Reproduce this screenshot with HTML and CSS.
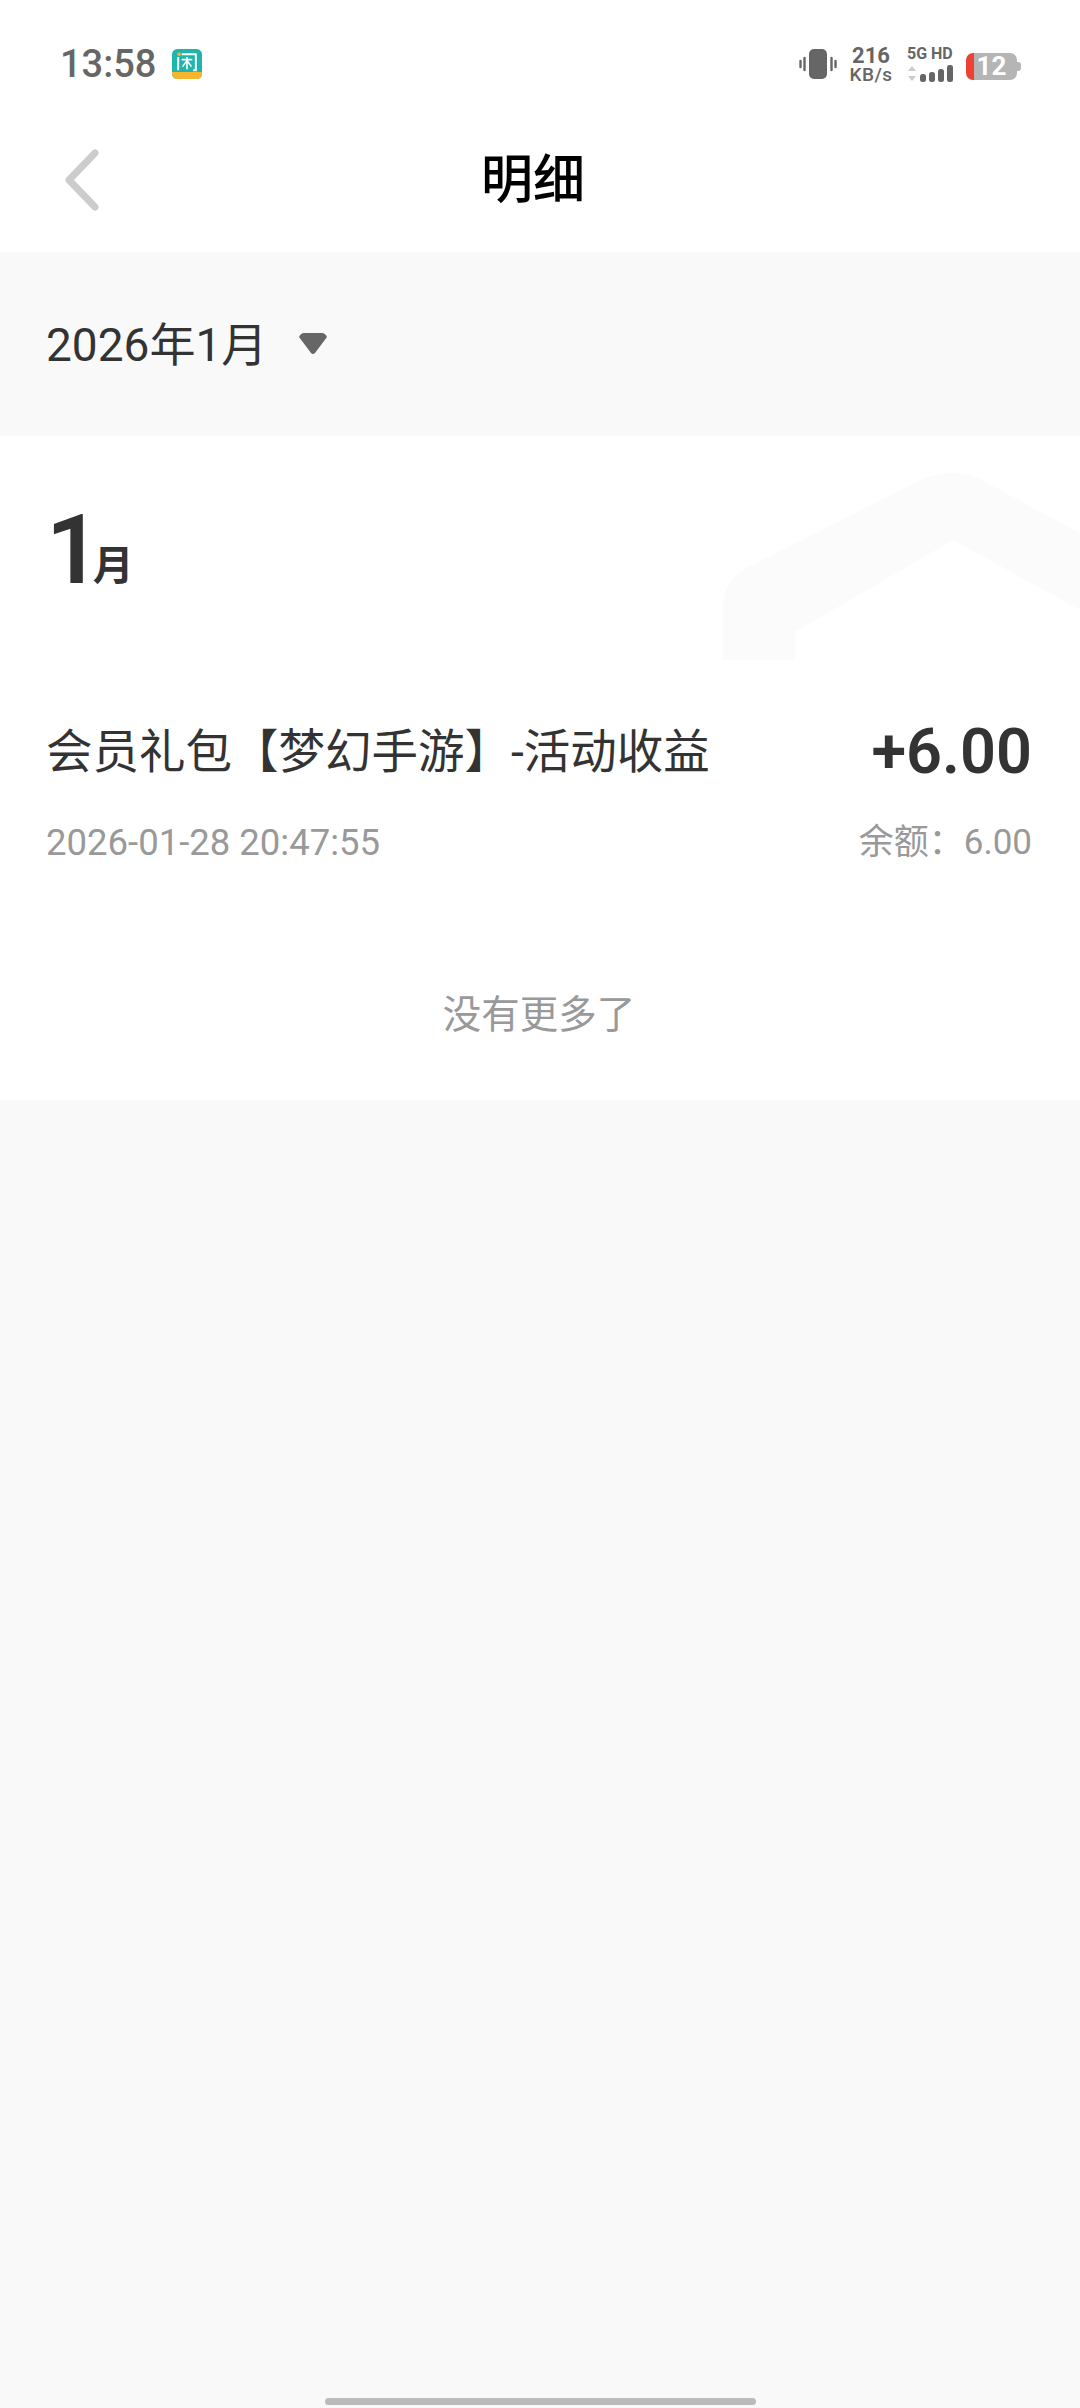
FILE: index.html
```html
<!DOCTYPE html>
<html lang="zh-CN">
<head>
    <meta charset="UTF-8">
    <meta name="viewport" content="width=device-width, initial-scale=1.0">
    <title>明细</title>
    <link rel="stylesheet" href="styles.css">
</head>
<body>
    <div class="status-bar">
        <div class="status-left">
            <span class="clock">13:58</span>
            <svg class="app-icon" width="30" height="30" viewBox="0 0 34 34">
                <rect width="34" height="34" rx="6" fill="#1fb5ac"/>
                <path d="M0 26h34v2a6 6 0 0 1-6 6H6a6 6 0 0 1-6-6z" fill="#f5b52e"/>
                <path d="M7 24V9M11 6h16v18h-3" fill="none" stroke="#fff" stroke-width="2.2"/>
                <path d="M11 12h12M17 9v14M17 13l-5 7M17 13l5 7" fill="none" stroke="#fff" stroke-width="1.8"/>
                <circle cx="8" cy="6" r="2" fill="#f5b52e"/>
            </svg>
        </div>
        <div class="status-right">
            <svg width="38" height="32" viewBox="0 0 38 32">
                <rect x="10" y="1" width="18" height="30" rx="5" fill="#666"/>
                <path d="M5.500 10v12M1.500 13v6M32.500 10v12M36.500 13v6" stroke="#666" stroke-width="2.400" stroke-linecap="round"/>
            </svg>
            <div class="speed">
                <span class="speed-num">216</span>
                <span class="speed-unit">KB/s</span>
            </div>
            <div class="network">
                <span class="network-label">5G HD</span>
                <svg width="47" height="17" viewBox="0 0 47 17">
                    <path d="M1 6l4-5 4 5zM1 11h8l-4 5z" fill="#ccc"/>
                    <rect x="13" y="9" width="6" height="8" rx="2.500" fill="#666"/>
                    <rect x="22" y="7" width="6" height="10" rx="2.500" fill="#666"/>
                    <rect x="31" y="4" width="6" height="13" rx="2.500" fill="#666"/>
                    <rect x="40" y="0" width="6" height="17" rx="2.500" fill="#666"/>
                </svg>
            </div>
            <div class="battery">
                <span class="battery-num">12</span>
            </div>
        </div>
    </div>

    <div class="top-bar">
        <svg class="back" width="36" height="62" viewBox="0 0 36 62">
            <path d="M31 4L5 31l26 27" fill="none" stroke="#ccc" stroke-width="7" stroke-linecap="round" stroke-linejoin="round"/>
        </svg>
        <h1 class="title">明细</h1>
    </div>

    <div class="filter">
        <span class="filter-date">2026年1月</span>
        <svg class="filter-arrow" width="32" height="23" viewBox="0 0 32 23">
            <path d="M7 1h18q3 0 5 4L18 21q-2 2-4 0L2 5q2-4 5-4z" fill="#666"/>
        </svg>
    </div>

    <div class="list">
        <svg class="watermark" width="357" height="190" viewBox="0 0 357 190">
            <path d="M0 188v-52q0-26 24-40L190 12q38-22 76 0l91 49v77L230 68 72 160v28z" fill="#fbfbfb"/>
        </svg>
        <div class="month"><span class="month-num">1</span><span class="month-unit">月</span></div>
        <div class="record">
            <div class="record-row">
                <span class="record-name">会员礼包【梦幻手游】-活动收益</span>
                <span class="record-amount">+6.00</span>
            </div>
            <div class="record-row record-sub">
                <span>2026-01-28 20:47:55</span>
                <span class="record-balance">余额：6.00</span>
            </div>
        </div>
        <div class="no-more">没有更多了</div>
    </div>

    <div class="home-bar"></div>
</body>
</html>
```

FILE: styles.css
```css
* {
    box-sizing: border-box;
}

html, body {
    height: 100%;
}

body {
    margin: 0;
    display: flex;
    flex-direction: column;
    background-color: #f9f9f9;
    font-family: Roboto, "Noto Sans CJK SC", sans-serif;
    color: #333;
    overflow: hidden;
}

.status-bar {
    height: 84px;
    padding: 47px 63px 0 60px;
    display: flex;
    justify-content: space-between;
    align-items: flex-start;
    background-color: #fff;
}

.status-left {
    display: flex;
    align-items: center;
    gap: 16px;
    height: 34px;
}

.clock {
    font-size: 38px;
    font-weight: 500;
    color: #666;
}

.status-right {
    display: flex;
    align-items: center;
    height: 34px;
}

.speed {
    margin-left: 11px;
    width: 46px;
    display: flex;
    flex-direction: column;
    align-items: center;
    color: #666;
}

.speed-num {
    font-size: 22px;
    font-weight: 700;
    line-height: 20px;
}

.speed-unit {
    font-size: 19px;
    font-weight: 500;
    letter-spacing: 0.5px;
    line-height: 17px;
}

.network {
    margin-left: 13px;
    width: 48px;
    display: flex;
    flex-direction: column;
    gap: 4px;
    color: #666;
}

.network-label {
    font-size: 16px;
    font-weight: 700;
    line-height: 14px;
    white-space: nowrap;
}

.battery {
    margin-left: 11px;
    width: 51px;
    height: 27px;
    margin-top: 5px;
    border-radius: 7px;
    background: linear-gradient(to right, #ee4136 8px, #b5b5b5 8px);
    display: flex;
    align-items: center;
    justify-content: center;
    position: relative;
}

.battery::after {
    content: "";
    position: absolute;
    right: -4px;
    top: 9px;
    width: 4px;
    height: 9px;
    border-radius: 0 3px 3px 0;
    background-color: #b5b5b5;
}

.battery-num {
    font-size: 26px;
    font-weight: 700;
    color: #fff;
    line-height: 27px;
}

.top-bar {
    height: 168px;
    padding: 24px 0 0 64px;
    display: flex;
    align-items: center;
    background-color: #fff;
}

.title {
    margin: 2px 0 0 381px;
    font-size: 52px;
    font-weight: 500;
    color: #000;
    line-height: 1;
}

.filter {
    height: 184px;
    padding: 0 46px 6px;
    display: flex;
    align-items: center;
    gap: 30px;
}

.filter-date {
    font-size: 46px;
    color: #333;
    white-space: nowrap;
}

.filter-arrow {
    margin-top: 5px;
}

.list {
    height: 664px;
    position: relative;
    background-color: #fff;
    padding: 0 48px 0 46px;
    overflow: hidden;
}

.watermark {
    position: absolute;
    right: 0;
    top: 36px;
}

.month {
    position: relative;
    height: 160px;
    padding-top: 59px;
    display: flex;
    align-items: baseline;
    font-weight: 600;
    color: #333;
}

.month-num {
    font-size: 96px;
    line-height: 110px;
    letter-spacing: -6px;
}

.month-unit {
    margin-left: -2px;
    font-size: 41px;
    transform: translateY(-3px);
}

.record {
    position: relative;
    padding-top: 126px;
}

.record-row {
    display: flex;
    justify-content: space-between;
    align-items: center;
}

.record-name {
    font-size: 46.5px;
    line-height: 60px;
}

.record-amount {
    font-size: 63px;
    font-weight: 600;
    line-height: 60px;
}

.record-sub {
    margin-top: 39px;
    font-size: 36.5px;
    line-height: 44px;
    color: #999;
}

.record-balance {
    font-size: 35px;
}

.no-more {
    margin-top: 125px;
    text-align: center;
    font-size: 38.5px;
    line-height: 50px;
    color: #999;
}

.home-bar {
    margin: auto auto 3px;
    width: 431px;
    height: 7px;
    border-radius: 4px;
    background-color: #bbb;
}
```
